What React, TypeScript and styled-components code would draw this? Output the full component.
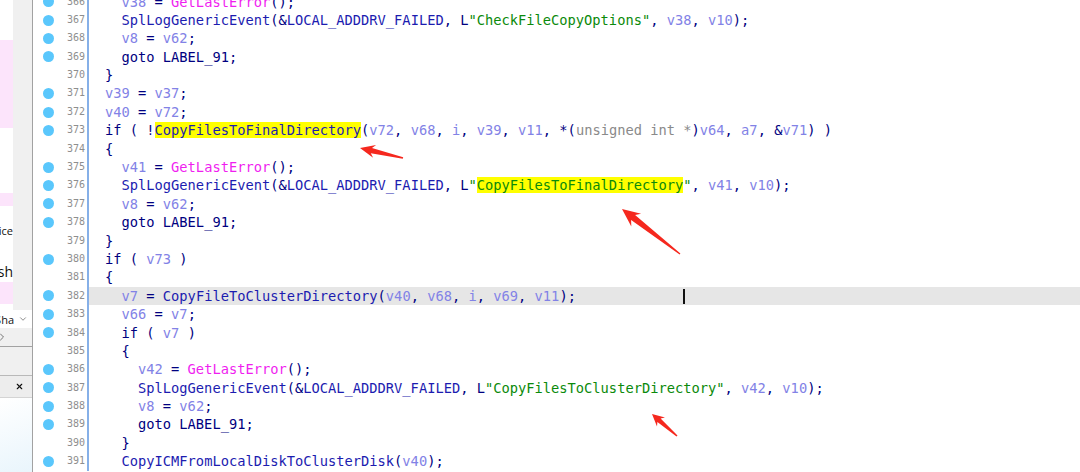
import React from 'react';
import styled, { createGlobalStyle } from 'styled-components';
import { ChevronDown, ChevronRight, X } from 'lucide-react';

const GlobalStyle = createGlobalStyle`
	html, body {
		margin: 0;
		padding: 0;
		background: #fff;
		overflow: hidden;
	}
	* {
		box-sizing: border-box;
	}
`;

type Kind = 'p' | 'f' | 'i' | 'v' | 's' | 't' | 'h' | 'hs';
type Tok = [Kind, string];
type Line = {n: number; dot: boolean; indent: number; toks: Tok[]; current?: boolean};

const ink: Record<Kind, string> = {
	p: '#000080',
	f: '#1c1cb0',
	i: '#f01ef0',
	v: '#8282e6',
	s: '#0b8a0b',
	t: '#8a8a8a',
	h: '#1c1cb0',
	hs: '#0b8a0b',
};

const P = (t: string): Tok => ['p', t];
const F = (t: string): Tok => ['f', t];
const I = (t: string): Tok => ['i', t];
const V = (t: string): Tok => ['v', t];
const S = (t: string): Tok => ['s', t];
const T = (t: string): Tok => ['t', t];

const logEvent = (name: string, v: string, hl = false): Tok[] => [
	F('SplLogGenericEvent'), P('(&'), F('LOCAL_ADDDRV_FAILED'), P(', L'), S('"'),
	hl ? ['hs', name] : S(name), S('"'), P(', '), V(v), P(', '), V('v10'), P(');'),
];

const lines: Line[] = [
	{n: 366, dot: true, indent: 1, toks: [V('v38'), P(' = '), I('GetLastError'), P('();')]},
	{n: 367, dot: true, indent: 1, toks: logEvent('CheckFileCopyOptions', 'v38')},
	{n: 368, dot: true, indent: 1, toks: [V('v8'), P(' = '), V('v62'), P(';')]},
	{n: 369, dot: true, indent: 1, toks: [P('goto LABEL_91;')]},
	{n: 370, dot: false, indent: 0, toks: [P('}')]},
	{n: 371, dot: true, indent: 0, toks: [V('v39'), P(' = '), V('v37'), P(';')]},
	{n: 372, dot: true, indent: 0, toks: [V('v40'), P(' = '), V('v72'), P(';')]},
	{n: 373, dot: true, indent: 0, toks: [
		P('if ( !'), ['h', 'CopyFilesToFinalDirectory'], P('('), V('v72'), P(', '), V('v68'), P(', '), V('i'),
		P(', '), V('v39'), P(', '), V('v11'), P(', *('), T('unsigned int *'), P(')'), V('v64'), P(', '),
		V('a7'), P(', &'), V('v71'), P(') )'),
	]},
	{n: 374, dot: false, indent: 0, toks: [P('{')]},
	{n: 375, dot: true, indent: 1, toks: [V('v41'), P(' = '), I('GetLastError'), P('();')]},
	{n: 376, dot: true, indent: 1, toks: logEvent('CopyFilesToFinalDirectory', 'v41', true)},
	{n: 377, dot: true, indent: 1, toks: [V('v8'), P(' = '), V('v62'), P(';')]},
	{n: 378, dot: true, indent: 1, toks: [P('goto LABEL_91;')]},
	{n: 379, dot: false, indent: 0, toks: [P('}')]},
	{n: 380, dot: true, indent: 0, toks: [P('if ( '), V('v73'), P(' )')]},
	{n: 381, dot: false, indent: 0, toks: [P('{')]},
	{n: 382, dot: true, indent: 1, current: true, toks: [
		V('v7'), P(' = '), F('CopyFileToClusterDirectory'), P('('), V('v40'), P(', '), V('v68'), P(', '),
		V('i'), P(', '), V('v69'), P(', '), V('v11'), P(');'),
	]},
	{n: 383, dot: true, indent: 1, toks: [V('v66'), P(' = '), V('v7'), P(';')]},
	{n: 384, dot: true, indent: 1, toks: [P('if ( '), V('v7'), P(' )')]},
	{n: 385, dot: false, indent: 1, toks: [P('{')]},
	{n: 386, dot: true, indent: 2, toks: [V('v42'), P(' = '), I('GetLastError'), P('();')]},
	{n: 387, dot: true, indent: 2, toks: logEvent('CopyFilesToClusterDirectory', 'v42')},
	{n: 388, dot: true, indent: 2, toks: [V('v8'), P(' = '), V('v62'), P(';')]},
	{n: 389, dot: true, indent: 2, toks: [P('goto LABEL_91;')]},
	{n: 390, dot: false, indent: 1, toks: [P('}')]},
	{n: 391, dot: true, indent: 1, toks: [F('CopyICMFromLocalDiskToClusterDisk'), P('('), V('v40'), P(');')]},
];

type ArrowSpec = {tip: [number, number]; tail: [number, number]; head: number; wing: number; neck: number};

const arrows: ArrowSpec[] = [
	{tip: [360, 148], tail: [403, 158], head: 15, wing: 6.5, neck: 2.6},
	{tip: [622, 209], tail: [680, 254], head: 18, wing: 8, neck: 3.2},
	{tip: [652, 414], tail: [677, 436], head: 12, wing: 6, neck: 2.4},
];

const arrowPoints = ({tip, tail, head, wing, neck}: ArrowSpec) => {
	const [tx, ty] = tip;
	const len = Math.hypot(tail[0] - tx, tail[1] - ty);
	const ux = (tail[0] - tx) / len;
	const uy = (tail[1] - ty) / len;
	const at = (d: number, w: number) =>
		`${(tx + ux * d - uy * w).toFixed(1)},${(ty + uy * d + ux * w).toFixed(1)}`;
	return [
		`${tx},${ty}`, at(head, wing), at(head * 0.78, neck), at(len, 0.7),
		at(len, -0.7), at(head * 0.78, -neck), at(head, -wing),
	].join(' ');
};

const Screen = styled.div`
	position: relative;
	display: flex;
	width: 1080px;
	height: 472px;
	overflow: hidden;
	background: #fff;
`;

const Side = styled.aside`
	width: 33px;
	flex-shrink: 0;
	display: flex;
	flex-direction: column;
	background: #f0f0f0;
	border-right: 1px solid #a2a2a2;
`;

const ListArea = styled.div`
	display: flex;
	height: 310px;
`;

const ListCol = styled.div`
	width: 13px;
	display: flex;
	flex-direction: column;
	background: #fff;
	overflow: hidden;
`;

const ListItem = styled.div<{$h: number; $pink?: boolean; $size?: number}>`
	height: ${p => p.$h}px;
	flex-shrink: 0;
	display: flex;
	align-items: center;
	justify-content: flex-end;
	white-space: nowrap;
	overflow: hidden;
	background: ${p => (p.$pink ? '#fce4fb' : '#fff')};
	font-family: 'Open Sans', 'Noto Sans', sans-serif;
	font-size: ${p => p.$size ?? 11}px;
	color: #111;
`;

const Strip = styled.div`
	flex: 1;
	background: #f0f0f0;
`;

const ComboRow = styled.div`
	height: 18px;
	display: flex;
	align-items: center;
	background: #fff;
	color: #555;
`;

const ComboText = styled.span`
	width: 14px;
	display: flex;
	justify-content: flex-end;
	overflow: hidden;
	white-space: nowrap;
	font-family: 'Open Sans', 'Noto Sans', sans-serif;
	font-size: 11px;
	color: #111;
	margin-right: 4px;
`;

const NavRow = styled.div`
	height: 19px;
	display: flex;
	align-items: center;
	border-bottom: 1px solid #a2a2a2;
	color: #555;

	svg {
		margin-left: -4px;
	}
`;

const Gap = styled.div`
	height: 28px;
`;

const TabHeader = styled.div`
	height: 23px;
	display: flex;
	align-items: center;
	justify-content: flex-end;
	padding-right: 8px;
	background: #ededed;
	border-top: 1px solid #b9b9b9;
	border-bottom: 1px solid #d4d4d4;
	color: #111;
`;

const TabBody = styled.div`
	flex: 1;
	background: linear-gradient(160deg, #ffffff 0%, #e9f5fc 100%);
`;

const CodeView = styled.main`
	flex: 1;
	background: #fff;
	overflow: hidden;
`;

const Lines = styled.div`
	margin-top: -7.5px;
`;

const Row = styled.div`
	display: flex;
	height: 18.4px;
`;

const DotCell = styled.div`
	width: 30px;
	flex-shrink: 0;
	display: flex;
	align-items: center;
	justify-content: center;
`;

const Dot = styled.span<{$on: boolean}>`
	width: 11px;
	height: 11px;
	border-radius: 50%;
	background: ${p => (p.$on ? '#5ac7fc' : 'transparent')};
`;

const LineNo = styled.div`
	width: 24px;
	flex-shrink: 0;
	padding-right: 2px;
	text-align: right;
	font-family: 'DejaVu Sans Mono', monospace;
	font-size: 10px;
	line-height: 18.4px;
	color: #8e8e8e;
`;

const CodeCell = styled.div<{$current?: boolean}>`
	flex: 1;
	position: relative;
	padding-left: 16px;
	border-left: 2px solid #86b0e8;
	background: ${p => (p.$current ? '#e6e6e6' : 'transparent')};
	white-space: pre;
	font-family: 'DejaVu Sans Mono', monospace;
	font-size: 13.72px;
	line-height: 18.4px;
	color: #000080;
`;

const Token = styled.span<{$kind: Kind}>`
	color: ${p => ink[p.$kind]};
	background: ${p => (p.$kind === 'h' || p.$kind === 'hs' ? '#ffff00' : 'transparent')};
`;

const Caret = styled.span`
	position: absolute;
	left: 594px;
	top: 2px;
	width: 2px;
	height: 15px;
	background: #111;
`;

const ArrowLayer = styled.svg`
	position: absolute;
	left: 0;
	top: 0;
	pointer-events: none;
`;

const SidePanel = () => (
	<Side>
		<ListArea>
			<ListCol>
				<ListItem $h={40} />
				<ListItem $h={88} $pink />
				<ListItem $h={65} />
				<ListItem $h={13} $pink />
				<ListItem $h={14} />
				<ListItem $h={20}>Service</ListItem>
				<ListItem $h={20} />
				<ListItem $h={22} $size={14}>Push</ListItem>
				<ListItem $h={22} $pink />
				<ListItem $h={6} />
			</ListCol>
			<Strip />
		</ListArea>
		<ComboRow>
			<ComboText>Sha</ComboText>
			<ChevronDown size={10} strokeWidth={1.6} />
		</ComboRow>
		<NavRow>
			<ChevronRight size={12} strokeWidth={1.6} />
		</NavRow>
		<Gap />
		<TabHeader>
			<X size={9} strokeWidth={3} />
		</TabHeader>
		<TabBody />
	</Side>
);

export default function App() {
	return (
		<Screen>
			<GlobalStyle />
			<SidePanel />
			<CodeView>
				<Lines>
					{lines.map(line => (
						<Row key={line.n}>
							<DotCell>
								<Dot $on={line.dot} />
							</DotCell>
							<LineNo>{line.n}</LineNo>
							<CodeCell $current={line.current}>
								{'  '.repeat(line.indent)}
								{line.toks.map(([kind, text], i) => (
									<Token key={i} $kind={kind}>{text}</Token>
								))}
								{line.current && <Caret />}
							</CodeCell>
						</Row>
					))}
				</Lines>
			</CodeView>
			<ArrowLayer width={1080} height={472} viewBox='0 0 1080 472'>
				{arrows.map((a, i) => (
					<polygon key={i} points={arrowPoints(a)} fill='#f5281e' />
				))}
			</ArrowLayer>
		</Screen>
	);
}
